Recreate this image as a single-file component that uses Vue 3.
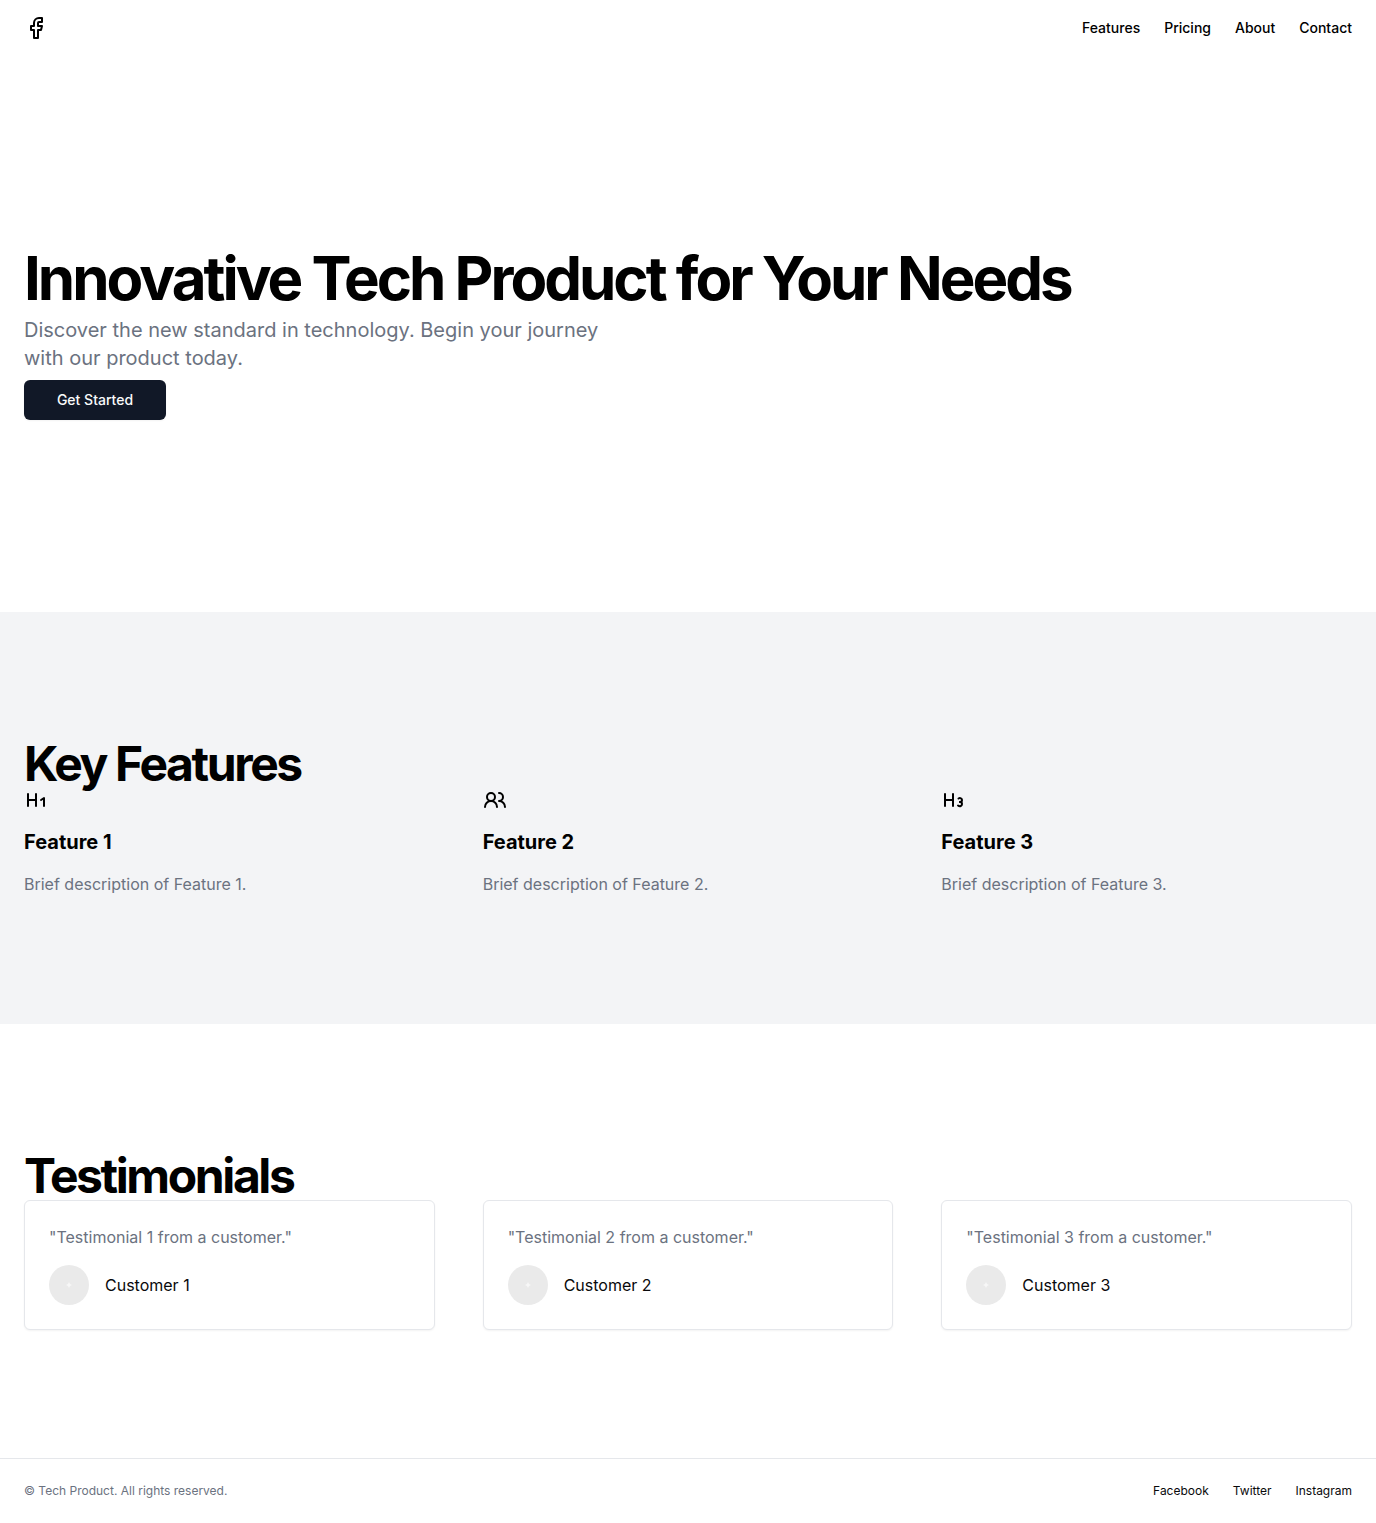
<script setup>
const navLinks = ['Features', 'Pricing', 'About', 'Contact']
const socialLinks = ['Facebook', 'Twitter', 'Instagram']

const features = [
  {
    title: 'Feature 1',
    text: 'Brief description of Feature 1.',
    paths: ['M4 12h8', 'M4 18V6', 'M12 18V6', 'm17 12 3-2v8'],
  },
  {
    title: 'Feature 2',
    text: 'Brief description of Feature 2.',
    paths: [
      'M14 19a6 6 0 0 0-12 0',
      'M8 13a4 4 0 1 0 0-8 4 4 0 0 0 0 8',
      'M22 19a6 6 0 0 0-6-6 4 4 0 1 0 0-8',
    ],
  },
  {
    title: 'Feature 3',
    text: 'Brief description of Feature 3.',
    paths: [
      'M4 12h8',
      'M4 18V6',
      'M12 18V6',
      'M17.5 10.5c1.7-1 3.5 0 3.5 1.5a2 2 0 0 1-2 2',
      'M17 17.5c2 1.5 4 .3 4-1.5a2 2 0 0 0-2-2',
    ],
  },
]

const testimonials = [1, 2, 3].map((n) => ({
  quote: `"Testimonial ${n} from a customer."`,
  name: `Customer ${n}`,
}))
</script>

<template>
  <div class="page">
    <header class="header">
      <a class="logo" href="#" aria-label="Home">
        <svg class="icon" viewBox="0 0 24 24" aria-hidden="true">
          <path d="M18 2h-3a5 5 0 0 0-5 5v3H7v4h3v8h4v-8h3l1-4h-4V7a1 1 0 0 1 1-1h3z" />
        </svg>
      </a>
      <nav class="nav">
        <a v-for="link in navLinks" :key="link" href="#">{{ link }}</a>
      </nav>
    </header>

    <main>
      <section class="hero">
        <h1>Innovative Tech Product for Your Needs</h1>
        <p>Discover the new standard in technology. Begin your journey with our product today.</p>
        <button type="button">Get Started</button>
      </section>

      <section class="section shaded">
        <h2>Key Features</h2>
        <div class="columns">
          <article v-for="feature in features" :key="feature.title" class="feature">
            <svg class="icon" viewBox="0 0 24 24" aria-hidden="true">
              <path v-for="d in feature.paths" :key="d" :d="d" />
            </svg>
            <h3>{{ feature.title }}</h3>
            <p>{{ feature.text }}</p>
          </article>
        </div>
      </section>

      <section class="section">
        <h2>Testimonials</h2>
        <div class="columns">
          <article v-for="item in testimonials" :key="item.name" class="card">
            <p>{{ item.quote }}</p>
            <div class="customer">
              <svg class="avatar" viewBox="0 0 40 40" aria-hidden="true">
                <circle cx="20" cy="20" r="20" fill="#eaeaea" />
                <path d="M20 17l1 2 2 1-2 1-1 2-1-2-2-1 2-1z" fill="#f7f7f7" />
              </svg>
              <span>{{ item.name }}</span>
            </div>
          </article>
        </div>
      </section>
    </main>

    <footer class="footer">
      <p>© Tech Product. All rights reserved.</p>
      <nav class="social">
        <a v-for="link in socialLinks" :key="link" href="#">{{ link }}</a>
      </nav>
    </footer>
  </div>
</template>

<style>
body {
  margin: 0;
  background: #fff;
}
</style>

<style scoped>
.page {
  color: #09090b;
  font-family: Inter, 'Liberation Sans', sans-serif;
  font-size: 16px;
  line-height: 24px;
}

h1,
h2,
h3,
p {
  margin: 0;
}

h1,
h2,
h3 {
  color: #000;
  font-weight: 700;
}

p {
  color: #6b7280;
}

a {
  color: inherit;
  text-decoration: none;
}

.icon {
  display: block;
  width: 24px;
  height: 24px;
  fill: none;
  stroke: #000;
  stroke-width: 2;
  stroke-linecap: round;
  stroke-linejoin: round;
}

.header {
  display: flex;
  align-items: center;
  justify-content: space-between;
  padding: 16px 24px;
}

.nav,
.social {
  display: flex;
  gap: 24px;
}

.nav {
  color: #000;
  font-size: 14px;
  font-weight: 500;
  line-height: 20px;
}

.hero {
  display: flex;
  flex-direction: column;
  align-items: flex-start;
  gap: 8px;
  padding: 192px 24px;
}

.hero h1 {
  font-size: 60px;
  line-height: 60px;
  letter-spacing: -0.05em;
}

.hero p {
  max-width: 600px;
  font-size: 20px;
  line-height: 28px;
}

.hero button {
  min-width: 142px;
  height: 40px;
  padding: 0 32px;
  border: 0;
  border-radius: 6px;
  background: #111827;
  box-shadow: 0 1px 2px rgb(0 0 0 / 5%);
  color: #f9fafb;
  font: 500 14px/20px Inter, 'Liberation Sans', sans-serif;
}

.section {
  padding: 128px 24px;
}

.shaded {
  background: #f3f4f6;
}

.section h2 {
  font-size: 48px;
  line-height: 48px;
  letter-spacing: -0.05em;
}

.columns {
  display: grid;
  grid-template-columns: repeat(3, 1fr);
  gap: 48px;
}

.feature,
.card {
  display: flex;
  flex-direction: column;
  gap: 16px;
}

.feature h3 {
  font-size: 20px;
  line-height: 28px;
}

.card {
  padding: 24px;
  border: 1px solid #e5e7eb;
  border-radius: 6px;
  background: #fff;
  box-shadow: 0 1px 2px rgb(0 0 0 / 5%);
}

.customer {
  display: flex;
  align-items: center;
  gap: 16px;
}

.avatar {
  width: 40px;
  height: 40px;
}

.footer {
  display: flex;
  align-items: center;
  justify-content: space-between;
  padding: 24px;
  border-top: 1px solid #e5e7eb;
  font-size: 12px;
  line-height: 16px;
}
</style>
